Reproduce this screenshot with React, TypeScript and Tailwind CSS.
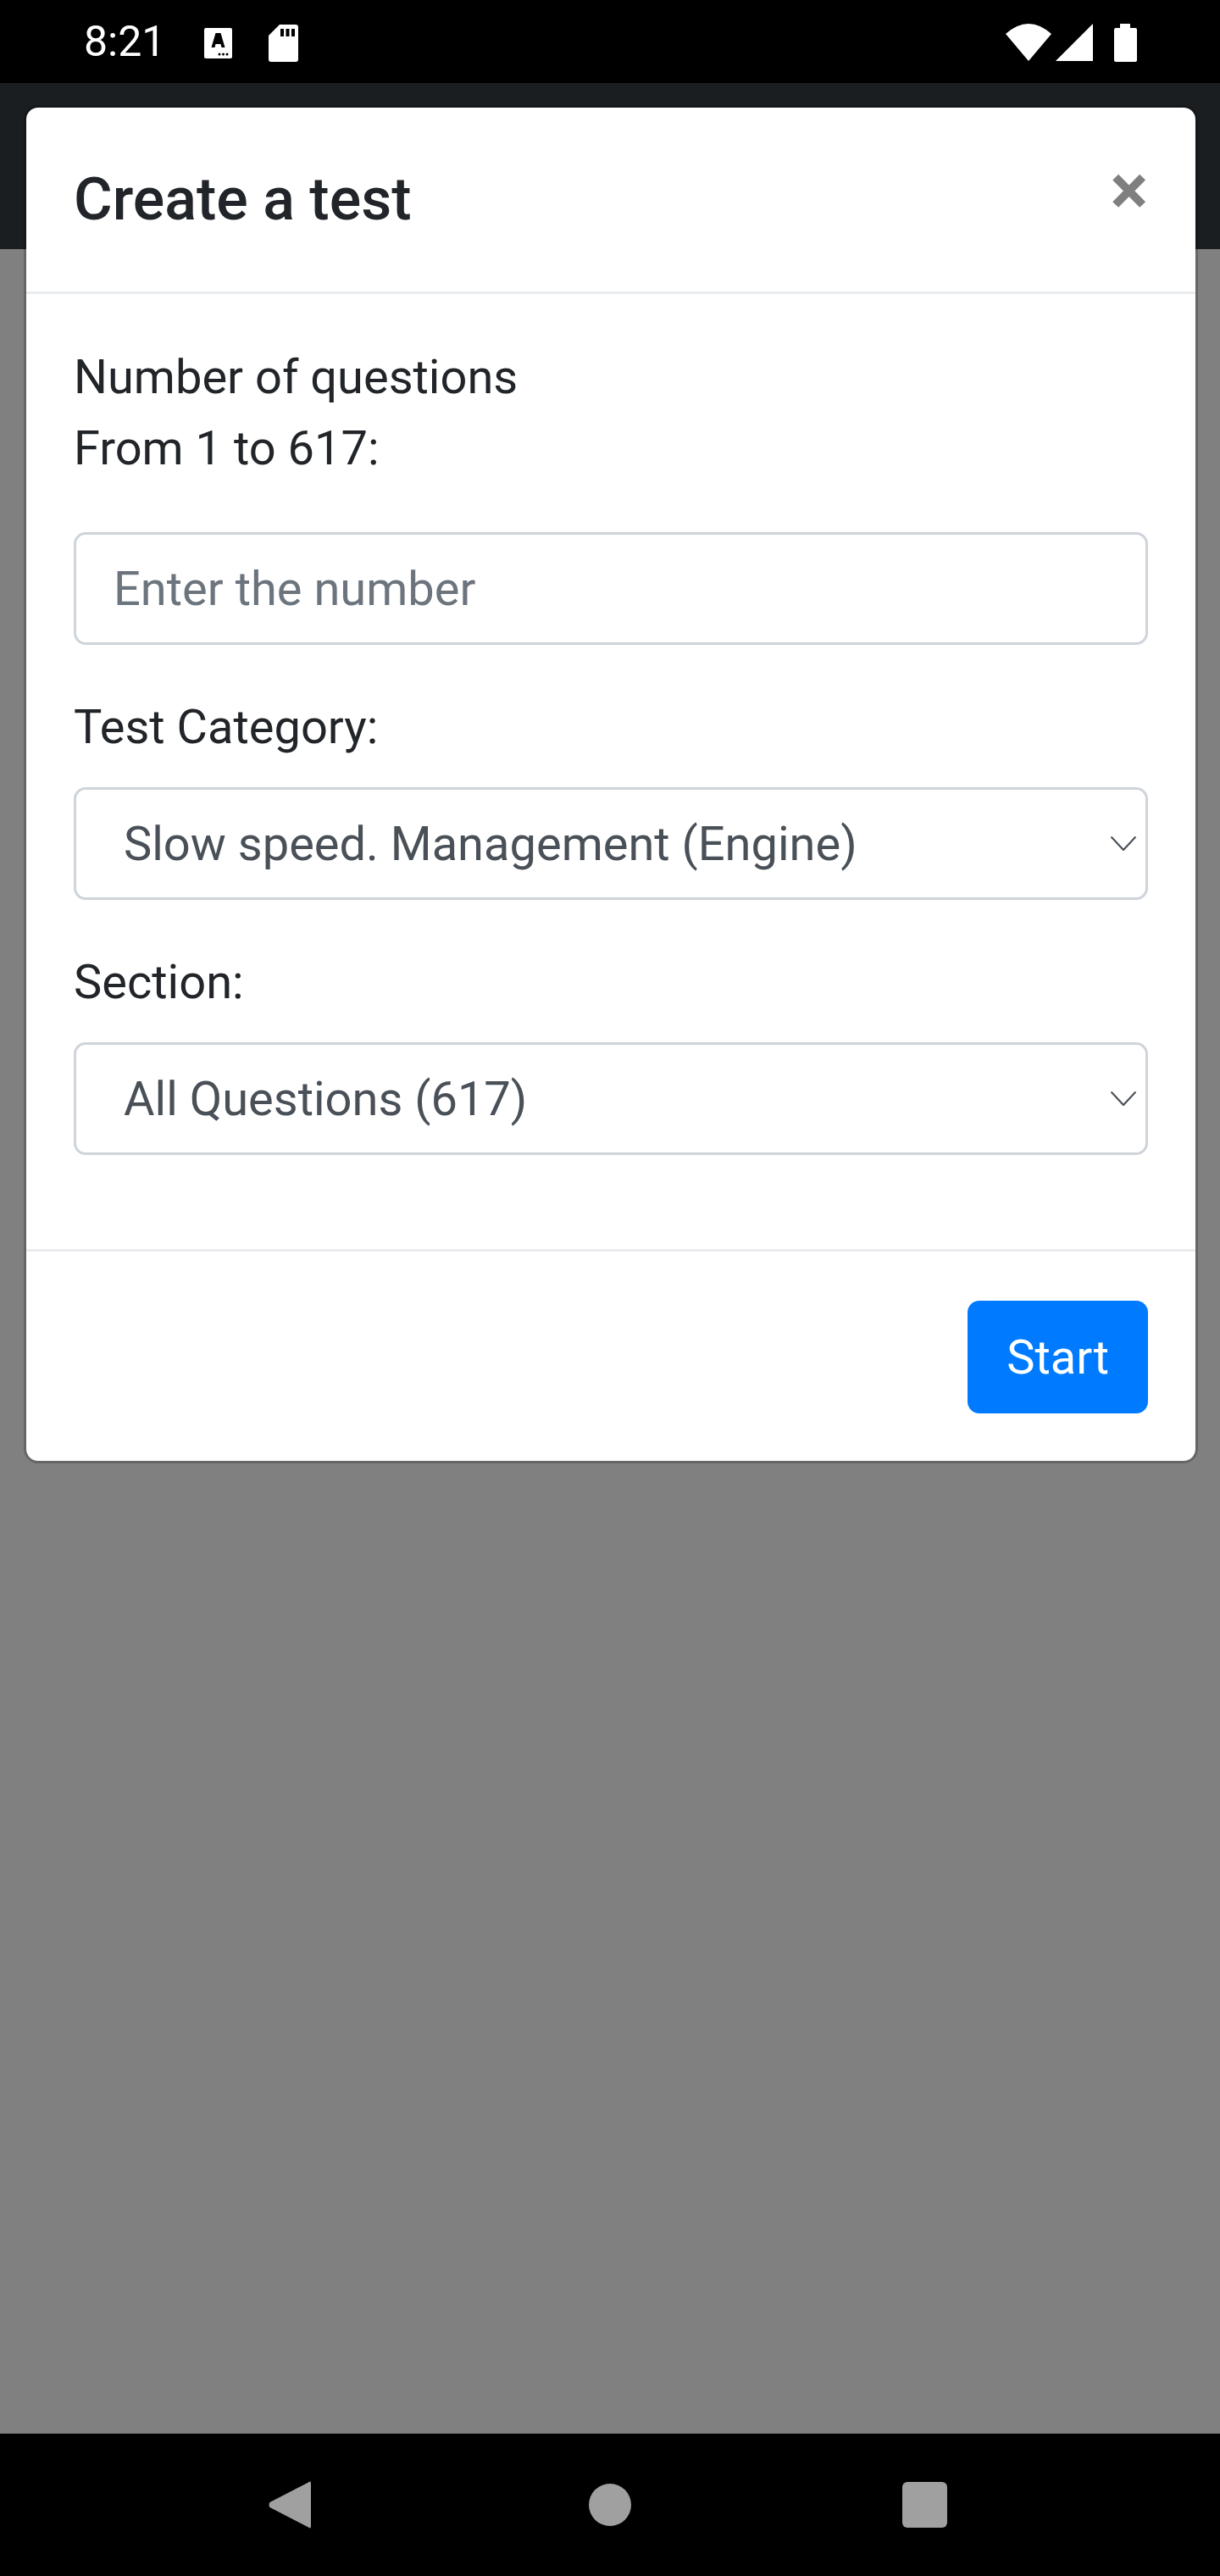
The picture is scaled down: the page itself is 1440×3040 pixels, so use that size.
const font = { fontFamily: "Roboto, sans-serif" };

function StatusBar() {
  return (
    <div className="flex h-[98px] items-center justify-between bg-black pl-[99px] pr-[98px] text-white">
      <div className="flex items-center">
        <span className="w-[142px] text-[50px] leading-[98px] font-normal">8:21</span>
        {/* keyboard notification */}
        <svg width="33" height="36" viewBox="0 0 33 36" className="mt-[4px]">
          <rect width="33" height="36" rx="2" fill="#fff" />
          <path d="M13.5 6h6l5 17h-4l-1-4h-6l-1 4H8.500z" fill="#000" />
          <circle cx="18" cy="31" r="1.500" fill="#000" />
          <circle cx="22.500" cy="31" r="1.500" fill="#000" />
          <circle cx="27" cy="31" r="1.500" fill="#000" />
        </svg>
        {/* sd card */}
        <svg width="35" height="44" viewBox="0 0 35 44" className="ml-[43px] mt-[4px]">
          <path d="M13 0h19a3 3 0 0 1 3 3v38a3 3 0 0 1-3 3H3a3 3 0 0 1-3-3V13z" fill="#fff" />
          <rect x="14" y="5" width="4" height="9" fill="#000" />
          <rect x="20.500" y="5" width="4" height="9" fill="#000" />
          <rect x="27" y="5" width="4" height="9" fill="#000" />
        </svg>
      </div>
      <div className="mt-[2px] flex items-center">
        <svg width="54" height="44" viewBox="0 0 54 44">
          <path d="M0 12Q27 -12 54 12L27 44z" fill="#fff" />
        </svg>
        <svg width="44" height="44" viewBox="0 0 44 44" className="ml-[5px]">
          <path d="M44 0V44H0z" fill="#fff" />
        </svg>
        <svg width="27" height="45" viewBox="0 0 27 45" className="ml-[25px]">
          <path d="M7 0h12v5h6a2 2 0 0 1 2 2v36a2 2 0 0 1-2 2H2a2 2 0 0 1-2-2V7a2 2 0 0 1 2-2h5z" fill="#fff" />
        </svg>
      </div>
    </div>
  );
}

function NavBar() {
  return (
    <div className="flex h-[168px] items-center bg-black pl-[317px]">
      <svg width="50" height="56" viewBox="0 0 50 56">
        <path d="M47 1.500Q50 -1 50 3V53Q50 57 47 54.500L1.500 31Q-0.500 28 1.500 25z" fill="#a0a0a0" />
      </svg>
      <div className="ml-[328px] h-[50px] w-[50px] rounded-full bg-[#a0a0a0]" />
      <div className="ml-[320px] h-[54px] w-[53px] rounded-[6px] bg-[#a0a0a0]" />
    </div>
  );
}

function SelectField({ value }: { value: string }) {
  return (
    <div className="relative">
      <select
        defaultValue={value}
        className="block h-[133px] w-full appearance-none rounded-[14px] border-[3.5px] border-[#ced4da] bg-white pl-[56px] pr-[42px] text-[56px] leading-[84px] text-[#495057]"
        style={font}
      >
        <option>{value}</option>
      </select>
      <svg
        width="30"
        height="17"
        viewBox="0 0 30 17"
        fill="none"
        className="pointer-events-none absolute right-[14px] top-[58px]"
      >
        <path d="M0.500 0.500L15 16L29.500 0.500" stroke="#495057" strokeWidth="2.200" />
      </svg>
    </div>
  );
}

export default function App() {
  return (
    <div className="relative flex h-[3040px] w-[1440px] flex-col overflow-hidden bg-[#808080]" style={font}>
      <StatusBar />
      <div className="h-[196px] bg-[#1b1e21]" />
      <div className="flex-1" />
      <NavBar />

      {/* modal */}
      <div className="absolute left-[28px] top-[124px] w-[1386px] rounded-[17px] border-[3.5px] border-black/20 bg-white bg-clip-padding text-[56px] leading-[84px] text-[#212529]">
        <div className="flex items-start border-b-[3.5px] border-[#e9ecef] p-[56px]">
          <h5 className="text-[70px] leading-[105px] font-medium">Create a test</h5>
          <button className="-m-[56px] ml-auto p-[56px] text-[84px] leading-[84px] font-bold text-black/50">×</button>
        </div>
        <div className="p-[56px]">
          <div className="mb-[57px]">
            Number of questions
            <br />
            From 1 to 617:
          </div>
          <input
            placeholder="Enter the number"
            className="mb-[55px] block h-[133px] w-full rounded-[14px] border-[3.5px] border-[#ced4da] bg-white pl-[44px] pr-[42px] text-[56px] text-[#495057] placeholder:text-[#6c757d]"
          />
          <div className="mb-[29px]">Test Category:</div>
          <div className="mb-[55px]">
            <SelectField value="Slow speed. Management (Engine)" />
          </div>
          <div className="mb-[29px]">Section:</div>
          <div className="mb-[55px]">
            <SelectField value="All Questions (617)" />
          </div>
        </div>
        <div className="flex justify-end border-t-[3.5px] border-[#e9ecef] px-[56px] pb-[56px] pt-[58px]">
          <button className="h-[133px] rounded-[14px] bg-[#007bff] px-[46px] text-[56px] text-white">Start</button>
        </div>
      </div>
    </div>
  );
}
